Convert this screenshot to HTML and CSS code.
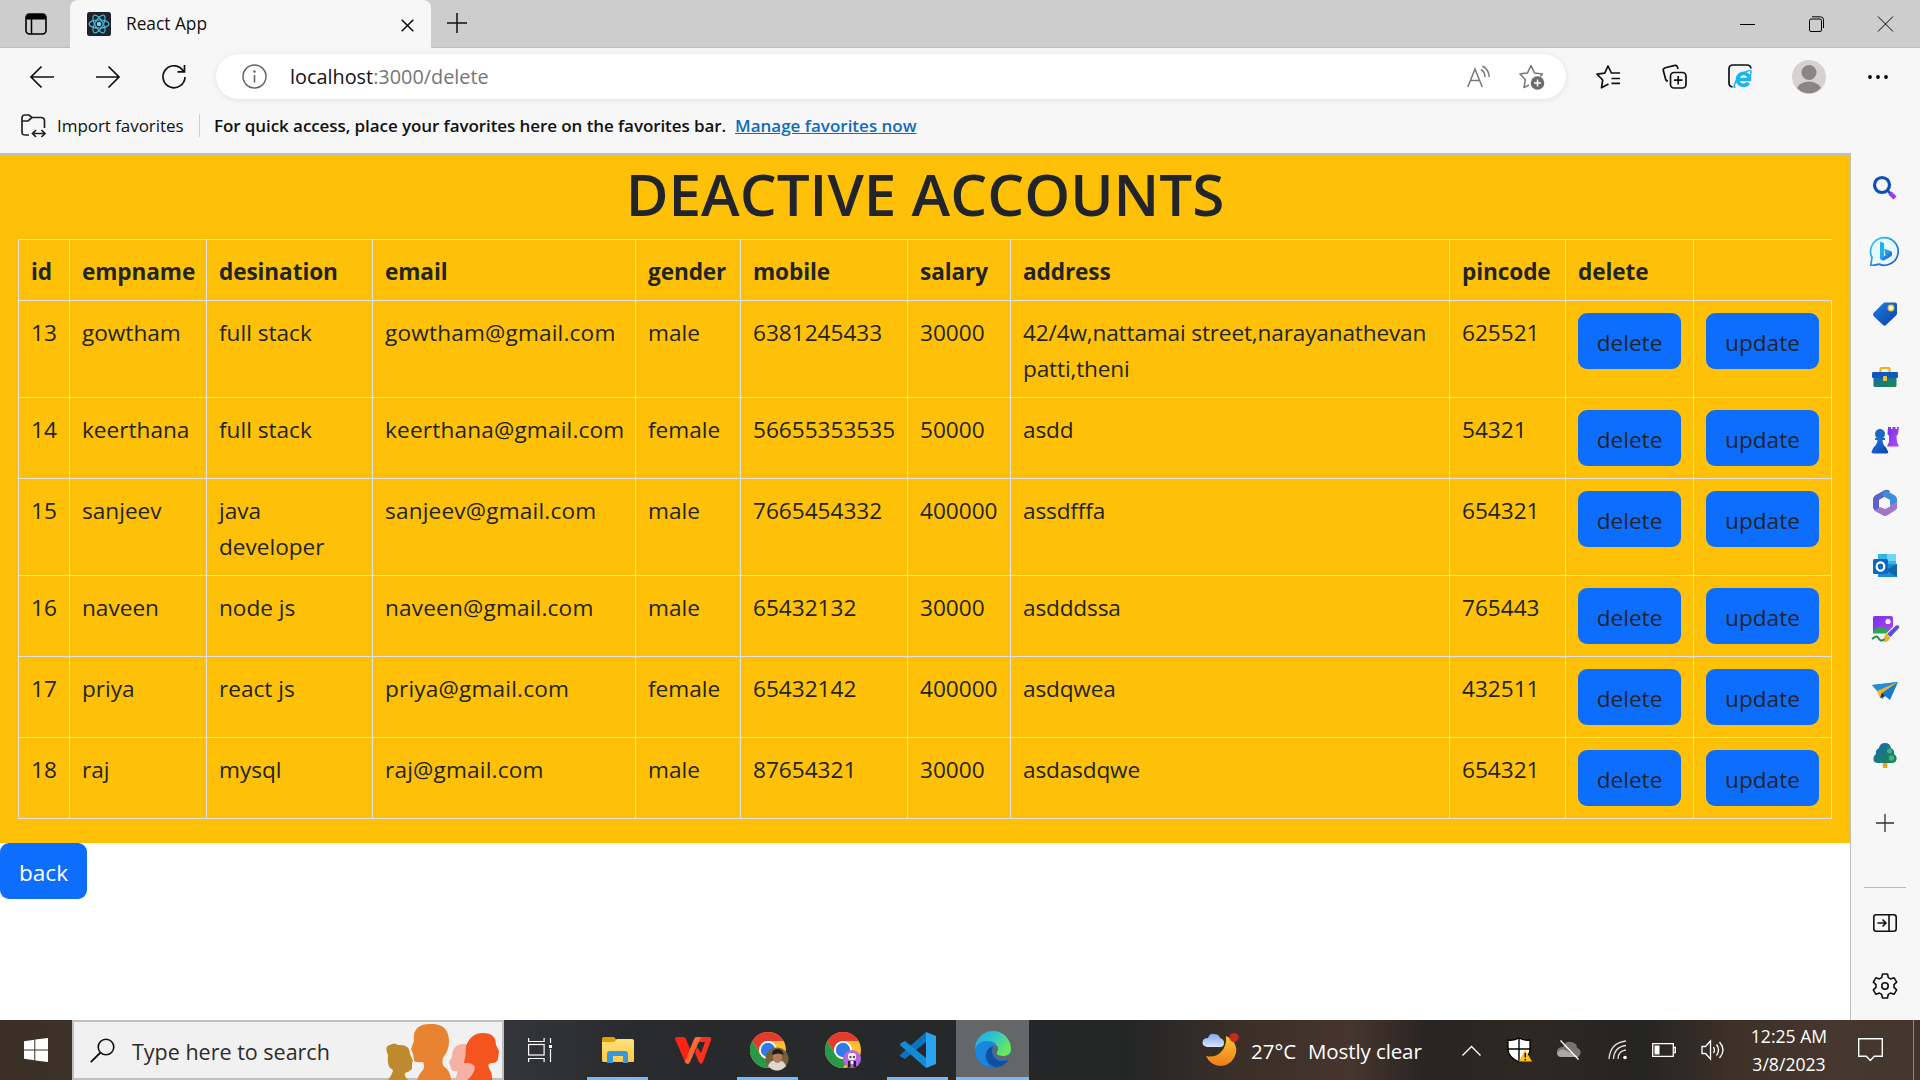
FILE: index.html
```html
<!DOCTYPE html>
<html lang="en">
<head>
<meta charset="utf-8">
<title>React App</title>
<link rel="stylesheet" href="styles.css">
</head>
<body>
<svg width="0" height="0" class="defs" aria-hidden="true">
  <defs>
    <linearGradient id="blue" x1="0" y1="0" x2="1" y2="1"><stop offset="0" stop-color="#1f7fe0"/><stop offset="1" stop-color="#0a3fae"/></linearGradient>
    <linearGradient id="cyan" x1="0" y1="0" x2="1" y2="1"><stop offset="0" stop-color="#35d0f5"/><stop offset="1" stop-color="#1a4fd0"/></linearGradient>
    <linearGradient id="teal" x1="0" y1="0" x2="1" y2="1"><stop offset="0" stop-color="#1668b8"/><stop offset="1" stop-color="#1a8a45"/></linearGradient>
    <linearGradient id="violet" x1="0" y1="0" x2="1" y2="1"><stop offset="0" stop-color="#7a2fe8"/><stop offset="1" stop-color="#b04af5"/></linearGradient>
    <linearGradient id="moon" x1="0" y1="0" x2="0" y2="1"><stop offset="0" stop-color="#f8c630"/><stop offset="1" stop-color="#f07c1a"/></linearGradient>
    <linearGradient id="cloud" x1="0" y1="0" x2="0" y2="1"><stop offset="0" stop-color="#7fa8ec"/><stop offset="1" stop-color="#d8e6fb"/></linearGradient>
    <linearGradient id="edgeTop" x1="0" y1="0" x2="1" y2=".5"><stop offset="0" stop-color="#25a4e8"/><stop offset=".5" stop-color="#2cc5d0"/><stop offset="1" stop-color="#6be85a"/></linearGradient>
    <linearGradient id="folder" x1="0" y1="0" x2="0" y2="1"><stop offset="0" stop-color="#ffe07a"/><stop offset="1" stop-color="#fccb45"/></linearGradient>
    <g id="chrome">
      <circle cx="18" cy="18" r="18" fill="#fbc031"/>
      <path d="M2.4 9A18 18 0 0 1 33.6 9H18A9 9 0 0 0 10.2 13.5L9 20Z" fill="#e33b2e"/>
      <path d="M2.4 9A18 18 0 0 0 18 36L25.8 22.5A9 9 0 0 1 10.2 22.5Z" fill="#279847"/>
      <circle cx="18" cy="18" r="9" fill="#fff"/>
      <circle cx="18" cy="18" r="7.2" fill="#2f7bea"/>
    </g>
  </defs>
</svg>

<header class="tabstrip">
  <svg class="tab-menu" width="22" height="22" viewBox="0 0 22 22"><rect x="1" y="1" width="20" height="20" rx="3.5" fill="none" stroke="#000" stroke-width="1.6"/><path d="M1 6.5V4a3 3 0 0 1 3-3h14a3 3 0 0 1 3 3v2.500z" fill="#000"/><path d="M6.500 6v15" stroke="#000" stroke-width="1.500"/></svg>
  <div class="tab">
    <svg width="24" height="24" viewBox="0 0 24 24"><rect width="24" height="24" rx="2.500" fill="#20232a"/><g fill="none" stroke="#4fb9d8" stroke-width="1.200"><ellipse cx="12" cy="12" rx="10" ry="4"/><ellipse cx="12" cy="12" rx="10" ry="4" transform="rotate(60 12 12)"/><ellipse cx="12" cy="12" rx="10" ry="4" transform="rotate(120 12 12)"/></g><circle cx="12" cy="12" r="2.200" fill="#61dafb"/></svg>
    <span class="tab-title">React App</span>
    <svg class="tab-close" width="13" height="13" viewBox="0 0 13 13"><path d="M.7.7l11.600 11.600M12.300.7L.7 12.300" stroke="#111" stroke-width="1.600"/></svg>
  </div>
  <svg class="tab-new" width="20" height="20" viewBox="0 0 20 20"><path d="M0 10h20M10 0v20" stroke="#111" stroke-width="1.500"/></svg>
  <div class="window-buttons">
    <svg width="15" height="16" viewBox="0 0 15 16"><path d="M0 8.500h15" stroke="#000"/></svg>
    <svg width="15" height="16" viewBox="0 0 15 16"><rect x=".5" y="3" width="12" height="12.500" rx="1.500" fill="none" stroke="#000"/><path d="M3 .8h8.500a3 3 0 0 1 3 3v8.200" fill="none" stroke="#000"/></svg>
    <svg width="15" height="16" viewBox="0 0 15 16"><path d="M0 .5l15 15M15 .5l-15 15" stroke="#000"/></svg>
  </div>
</header>

<div class="toolbar">
  <nav class="nav-buttons">
    <svg width="24" height="24" viewBox="0 0 24 24"><path d="M24 12H1M11.500 1.500L1 12l10.500 10.500" fill="none" stroke="#111" stroke-width="1.700"/></svg>
    <svg width="24" height="24" viewBox="0 0 24 24"><path d="M0 12h23M12.500 1.500L23 12 12.500 22.500" fill="none" stroke="#111" stroke-width="1.700"/></svg>
    <svg width="24" height="24" viewBox="0 0 24 24"><path d="M21.500 6.200A11 11 0 1 0 23 12M22.500 0v6.800h-7" fill="none" stroke="#111" stroke-width="1.700"/></svg>
  </nav>
  <div class="address">
    <svg width="25" height="25" viewBox="0 0 25 25"><circle cx="12.500" cy="12.500" r="11.500" fill="none" stroke="#666" stroke-width="1.500"/><path d="M12.500 11v7.500" stroke="#666" stroke-width="1.600"/><circle cx="12.500" cy="7.500" r="1.200" fill="#666"/></svg>
    <span class="url">localhost<span class="url-path">:3000/delete</span></span>
    <svg class="read" width="23" height="23" viewBox="0 0 23 23"><g fill="none" stroke="#777" stroke-width="1.500"><path d="M.8 22L8 4l7.200 18M3.500 15.500h9"/><path d="M14 4.500q4 2.500 4 7.500M15.500 1q6.500 3.500 6.700 11"/></g></svg>
    <svg class="fav-add" width="26" height="26" viewBox="0 0 26 26"><path d="M10 21L5 23.500 6.400 15.500.9 10l7.600-1.100L12 1.500l3.500 7.400 8 1.100-2.300 2.500" fill="none" stroke="#777" stroke-width="1.500" stroke-linejoin="round"/><circle cx="18.500" cy="19" r="6.800" fill="#6d6d6d"/><path d="M18.500 15.500v7M15 19h7" stroke="#fff" stroke-width="1.500"/></svg>
  </div>
  <div class="tools">
    <svg width="25" height="24" viewBox="0 0 25 24"><g fill="none" stroke="#111" stroke-width="1.700" stroke-linejoin="round"><path d="M12.500 19L5.500 22.800 6.700 15 1 9.200l7.700-1.100L12 1l3.400 7H24M15.500 13.500H24M15.500 18.300H24"/></g></svg>
    <svg width="25" height="25" viewBox="0 0 25 25"><g fill="none" stroke="#111" stroke-width="1.700"><rect x="8.500" y="8.500" width="15.500" height="15.500" rx="3.500"/><path d="M16.200 12v8.500M12 16.200h8.500M16 5l-.7-2.300Q14.800 1 13 1.400L3.200 3.700Q.8 4.500 1.300 6.500l2.300 8.500Q4 17 6 17"/></g></svg>
    <svg width="24" height="25" viewBox="0 0 24 25"><path d="M4.500 23Q1 22.500 1 19V5q0-4 4-4h14q3.500 0 4 3.500" fill="none" stroke="#111" stroke-width="1.700"/><g fill="none" stroke="#1db4ee"><path d="M9.500 15.500H21.500A6 6 0 1 0 20.500 18.700" stroke-width="3.600"/><path d="M7.500 22.500Q5 25 6.500 20.500 9.500 12 17.500 8q6-3 5.500 0 0 2-1 4" stroke-width="1.500"/></g></svg>
    <svg class="avatar" width="34" height="34" viewBox="0 0 34 34"><clipPath id="av"><circle cx="17" cy="17" r="16.200"/></clipPath><circle cx="17" cy="17" r="17" fill="#d5d3d0"/><circle cx="17" cy="12.500" r="7.500" fill="#8a8683"/><ellipse cx="17" cy="31" rx="12.500" ry="9.500" fill="#8a8683" clip-path="url(#av)"/></svg>
    <svg width="20" height="6" viewBox="0 0 20 6"><circle cx="2" cy="3" r="1.900"/><circle cx="10" cy="3" r="1.900"/><circle cx="18" cy="3" r="1.900"/></svg>
  </div>
</div>

<div class="favbar">
  <svg width="25" height="24" viewBox="0 0 25 24"><g fill="none" stroke="#222" stroke-width="1.700"><path d="M8 21H4q-3 0-3-3V4q0-3 3-3h4l3 2.500h9q3.500 0 3.500 3.500v7M1 7h6l4-3.500"/><path d="M12 19.500h12M15 16l-3.500 3.500L15 23M20.500 16l3.500 3.500-3.500 3.500"/></g></svg>
  <span class="import">Import favorites</span>
  <span class="hint">For quick access, place your favorites here on the favorites bar.</span>
  <a class="manage">Manage favorites now</a>
</div>

<div class="workspace">
  <main class="page">
    <section class="panel">
      <h1>DEACTIVE ACCOUNTS</h1>
      <table>
        <colgroup><col class="c-id"><col class="c-name"><col class="c-desig"><col class="c-email"><col class="c-gender"><col class="c-mobile"><col class="c-salary"><col class="c-address"><col class="c-pin"><col class="c-delete"><col class="c-update"></colgroup>
        <thead><tr><th>id</th><th>empname</th><th>desination</th><th>email</th><th>gender</th><th>mobile</th><th>salary</th><th>address</th><th>pincode</th><th>delete</th></tr></thead>
        <tbody>
          <tr class="tall"><td>13</td><td>gowtham</td><td>full stack</td><td class="mail">gowtham@gmail.com</td><td>male</td><td>6381245433</td><td>30000</td><td class="addr">42/4w,nattamai street,narayanathevan<br>patti,theni</td><td>625521</td><td class="act"><button class="btn">delete</button></td><td class="act"><button class="btn">update</button></td></tr>
          <tr><td>14</td><td>keerthana</td><td>full stack</td><td class="mail">keerthana@gmail.com</td><td>female</td><td>56655353535</td><td>50000</td><td class="addr">asdd</td><td>54321</td><td class="act"><button class="btn">delete</button></td><td class="act"><button class="btn">update</button></td></tr>
          <tr class="tall"><td>15</td><td>sanjeev</td><td>java<br>developer</td><td class="mail">sanjeev@gmail.com</td><td>male</td><td>7665454332</td><td>400000</td><td class="addr">assdfffa</td><td>654321</td><td class="act"><button class="btn">delete</button></td><td class="act"><button class="btn">update</button></td></tr>
          <tr><td>16</td><td>naveen</td><td>node js</td><td class="mail">naveen@gmail.com</td><td>male</td><td>65432132</td><td>30000</td><td class="addr">asdddssa</td><td>765443</td><td class="act"><button class="btn">delete</button></td><td class="act"><button class="btn">update</button></td></tr>
          <tr><td>17</td><td>priya</td><td>react js</td><td class="mail">priya@gmail.com</td><td>female</td><td>65432142</td><td>400000</td><td class="addr">asdqwea</td><td>432511</td><td class="act"><button class="btn">delete</button></td><td class="act"><button class="btn">update</button></td></tr>
          <tr><td>18</td><td>raj</td><td>mysql</td><td class="mail">raj@gmail.com</td><td>male</td><td>87654321</td><td>30000</td><td class="addr">asdasdqwe</td><td>654321</td><td class="act"><button class="btn">delete</button></td><td class="act"><button class="btn">update</button></td></tr>
        </tbody>
      </table>
    </section>
    <button class="btn back">back</button>
  </main>

  <aside class="sidebar">
    <div class="apps">
      <svg width="32" height="32" viewBox="0 0 32 32"><circle cx="13" cy="13" r="7.500" fill="none" stroke="#0f4fb8" stroke-width="3.200"/><path d="M18.500 18.500l3 3" stroke="#0f4fb8" stroke-width="2.500"/><path d="M21 21l5 5" stroke="#9a3df0" stroke-width="4.500"/></svg>
      <svg width="32" height="32" viewBox="0 0 32 32"><path d="M1.800 30.200L3 22.500A13.800 13.800 0 1 1 10 29.100Q6 30.500 1.800 30.200z" fill="#e8f9ff" stroke="url(#cyan)" stroke-width="1.700"/><path d="M11 6.500l4 1.600v13.400l-4 2.500z" fill="#22aeef"/><path d="M11 23.500l5.500-3-1.500-7 7.500 3q2 4-2 5.800l-5.500 3.200q-3 .5-4-2z" fill="url(#cyan)"/></svg>
      <svg width="32" height="32" viewBox="0 0 32 32"><path d="M16 4.500h10q2 0 2 2v9q0 1-1 2L17 27q-1.500 1.500-3 0L4.500 18q-1-1.500 0-3L14 5.500q1-1 2-1z" fill="url(#blue)"/><circle cx="22" cy="10" r="2.700" fill="#fff" stroke="#f5c42c" stroke-width="1.500"/></svg>
      <svg width="32" height="32" viewBox="0 0 32 32"><path d="M11.500 11V8q0-1 1-1h7q1 0 1 1v3" fill="none" stroke="#f0ac25" stroke-width="2.200"/><rect x="4.500" y="15" width="23" height="11" rx="1.500" fill="url(#teal)"/><rect x="3" y="11" width="26" height="6" rx="1.200" fill="#1157c2"/><rect x="14" y="15" width="4" height="5" rx="1" fill="#f5c42c"/></svg>
      <svg width="32" height="32" viewBox="0 0 32 32"><path d="M19 3h3v2h1.500V3h3v2H28V3h2l-1 7-1.500 2 .5 6 2 4.500H18l2-4.500v-6l-1.500-2z" fill="url(#violet)"/><circle cx="11" cy="10" r="5" fill="#1b68c4"/><path d="M6 14h10v2h-2.500q0 5 3.500 7.500l1.500 3q2 3-1.500 3H5q-3.500 0-2-3l1.500-3Q8 21 8.500 16H6z" fill="url(#blue)"/></svg>
      <svg width="32" height="32" viewBox="0 0 32 32"><path d="M16 3L6 8.500Q4 10 4 12v8q0 2 2 3.500l4 2V13l9-5.500L21 4q-3-2-5-1z" fill="#5c62c8"/><path d="M16 3l10 5.500Q28 10 28 12v10l-7-4v-5l-8-4.500z" fill="#3b8fda"/><path d="M28 20q0 2-2 3.500l-8 5q-2 1-4 0l-9-5 6-3.500 5 2 6-4 6-3z" fill="#a176c8"/><path d="M16 10.500l5 3v6L16 22l-5-3v-5.500z" fill="#f7f7f7"/></svg>
      <svg width="32" height="32" viewBox="0 0 32 32"><path d="M9 4h18v12H9z" fill="#35b4ec"/><path d="M18 4h9v7h-9z" fill="#70d3f8"/><path d="M9 14h19v13H9z" fill="#1b8bd8"/><path d="M17 20l11-6v13z" fill="#1262ac"/><rect x="4" y="9" width="15" height="15" rx="1.500" fill="#0b68bd"/><ellipse cx="11.500" cy="16.500" rx="3.800" ry="4.200" fill="none" stroke="#fff" stroke-width="2.200"/></svg>
      <svg width="32" height="32" viewBox="0 0 32 32"><rect x="4" y="3" width="20" height="20" rx="2" fill="url(#violet)"/><circle cx="19" cy="8.500" r="2.600" fill="#fff"/><path d="M4 18q8-8 16 0l-4 4H4z" fill="#2aa655"/><path d="M4 20.500h13l7-7h2v10H4z" fill="#f7f7f7"/><path d="M3 26q5-4 6-1.500t3 3 5-2.500" fill="none" stroke="#1c8a4a" stroke-width="2"/><path d="M18 21l9-8.500q4-1 3 2.500L21.500 24z" fill="#5550e0"/><path d="M17.500 20.500l4 4q-2 5-7 4.500 2-2 .5-5z" fill="#f2b128"/></svg>
      <svg width="32" height="32" viewBox="0 0 32 32"><path d="M3 9l26-3-8 18-5-4-3 3-3-6z" fill="#147bd1"/><path d="M3 9l26-3L10 17z" fill="#1e90e0"/><path d="M29 6L8 15l3 7 2-5z" fill="#f5b324"/><path d="M11 22l2-5 3 3z" fill="#333"/></svg>
      <svg width="32" height="32" viewBox="0 0 32 32"><rect x="13.800" y="22" width="4.600" height="7" rx="1" fill="#f0a020"/><path d="M16 4q5 0 6 5 4 2 3 6 4 3 2 7-1 2-4 2H9q-4 0-4.500-3Q4 17 7 15q-1-4 3-6 1-5 6-5z" fill="url(#teal)"/><circle cx="20.500" cy="12" r="2.500" fill="#4cab82"/><circle cx="22.500" cy="19" r="2.700" fill="#49ad7d"/></svg>
    </div>
    <svg class="add-app" width="18" height="18" viewBox="0 0 18 18"><path d="M0 9h18M9 0v18" stroke="#333" stroke-width="1.300"/></svg>
    <div class="rule"></div>
    <svg class="hide-bar" width="24" height="18" viewBox="0 0 24 18"><g fill="none" stroke="#111" stroke-width="1.600"><rect x=".8" y=".8" width="22.400" height="16.400" rx="2.500"/><path d="M16 1v16M4.500 9h8M9.500 5.500L13 9l-3.500 3.500"/></g></svg>
    <svg class="settings" width="26" height="26" viewBox="0 0 26 26"><g fill="none" stroke="#111" stroke-width="1.600" stroke-linejoin="round"><path d="M10.500 1h5l.8 3.600 2.300 1.300L22 4.700l2.700 4.400L22 11.600v2.800l2.700 2.500L22 21.300l-3.400-1.200-2.300 1.300-.8 3.600h-5l-.8-3.600-2.300-1.300L4 21.300l-2.700-4.400L4 14.400v-2.800L1.300 9.100 4 4.700l3.400 1.200 2.300-1.300z"/><circle cx="13" cy="13" r="3.200"/></g></svg>
  </aside>
</div>

<footer class="taskbar">
  <div class="start"><svg width="24" height="24" viewBox="0 0 24 24"><path d="M0 3.200l10.300-1.400v9.700H0zM11.300 1.600L24 0v11.500H11.300zM0 12.500h10.300v9.700L0 20.800zM11.300 12.500H24V24l-12.700-1.600z" fill="#fff"/></svg></div>
  <div class="search">
    <svg class="glass" width="25" height="25" viewBox="0 0 25 25"><circle cx="16" cy="9" r="7.800" fill="none" stroke="#111" stroke-width="1.600"/><path d="M10.500 14.500L.8 24.200" stroke="#111" stroke-width="1.800"/></svg>
    <span>Type here to search</span>
    <svg class="people" width="116" height="58" viewBox="0 0 116 58">
      <path d="M2 58q4-4 6-10 0-2-3-3-3-4-2-13-4-9 2-10 4-3 8 0 12-1 12 9l3 7-1 2 0 6-4 3q-4 0-3 4 2 4 5 5z" fill="#bf8a2d"/>
      <path d="M68 58q5-6 4-10-5 1-6-3l-2-6 3-5q0-13 12-13 14 0 14 12v25z" fill="#f5b2a3"/>
      <path d="M32 58q1-6 6-11 2-4 0-8-9 1-9-2l-1-6-2-5 3-8Q27 0 47 1q17 0 17 18 0 8-6 16-2 7 3 10 5 5 5 13z" fill="#e88331"/>
      <path d="M81 58q8-6 9-14-3-4-7-4h-4q2-8 2-17Q86 10 98 10q13 0 13 12l3 6-1 7q0 5-6 5-5 0-3 5 4 6 3 13z" fill="#f4541e"/>
    </svg>
  </div>
  <svg class="task-view" width="25" height="24" viewBox="0 0 25 24"><g fill="none" stroke="#fff" stroke-width="1.200"><path d="M.6 0v3.500h15.500V0M.6 24v-3.500h15.500V24M22.500 0v5M22.500 11v13"/><rect x=".6" y="6.500" width="15.500" height="10.500"/></g><rect x="21" y="7" width="3" height="3" fill="#fff"/></svg>
  <div class="pinned">
    <div class="app open"><svg width="36" height="36" viewBox="0 0 36 36"><path d="M2 7q0-2 2-2h10l3 3h15q2 0 2 2v20H4q-2 0-2-2z" fill="#e0a100"/><path d="M2 10h12l3-3h15q2 0 2 2v19q0 2-2 2H4q-2 0-2-2z" fill="url(#folder)"/><path d="M7 31V22q0-3 3-3h15q3 0 3 3v9h-5v-7H13v7z" fill="#3b96dc"/></svg></div>
    <div class="app"><svg width="36" height="36" viewBox="0 0 36 36"><path d="M0 7q0-2 2-2h6q2 0 3 2l6 15-3 8q-2 3-4 0z" fill="#fb2218"/><path d="M20 5h14q3 0 2 3l-8 22q-2 4-4 0l-4-9 2-6 4 6 4-11h-7z" fill="#f9301e"/><path d="M10 30L19 7q1-2 3-2h4L15 30q-2 4-5 0z" fill="#ff6a32"/></svg></div>
    <div class="app open"><svg width="36" height="36" viewBox="0 0 36 36"><use href="#chrome"/><circle cx="27" cy="27" r="11.500" fill="#75603a"/><path d="M18 34q2-6 9-6t9 6q-9 9-18 0z" fill="#ddd8d2"/><ellipse cx="27.500" cy="25" rx="4.600" ry="6" fill="#b47c5c"/><path d="M22 23q0-6 5.500-6t6 6q-5-3-11.500 0z" fill="#241c18"/></svg></div>
    <div class="app"><svg width="36" height="36" viewBox="0 0 36 36"><use href="#chrome"/><circle cx="27" cy="27" r="9" fill="#b568e0"/><rect x="23" y="21" width="8" height="7" rx="2.500" fill="#eee"/><path d="M24.500 25h2M28 25h2" stroke="#222" stroke-width="1.500"/><path d="M23 35v-6h8v6h-2.500v-3h-3v3z" fill="#222"/><path d="M25.500 29h3v3h-3z" fill="#eee"/></svg></div>
    <div class="app open"><svg width="36" height="36" viewBox="0 0 36 36"><path d="M26 0v10L5 27l-4-2q-2-1.500 0-3z" fill="#0c74bd"/><path d="M26 36V26L5 9 1 11q-2 1.500 0 3z" fill="#1489d4"/><path d="M26 0l10 4v28l-10 4z" fill="#2ba3f0"/></svg></div>
    <div class="app open active"><svg width="36" height="36" viewBox="0 0 36 36"><circle cx="18" cy="18" r="18" fill="#1277cf"/><path d="M0 17A18 18 0 0 1 36 17q0 7-7 7-9 0-7-4 2-5-3-8T0 17z" fill="url(#edgeTop)"/><path d="M0 18Q2 9 12 9q10 0 11 8-9-4-12 4-3 8 5 14Q1 33 0 18z" fill="#1b86dc"/><path d="M18 14q-8 3-7 11 2 8 10 10.500 9-1.500 13-8-8 4-14-1-5-5-2-12z" fill="#124fa0"/><path d="M18 14q4-1 5 2 0 2-1.500 4-1 3 3 4 5 1 9-1 3-2 4-4l1 6-4.500 2.500Q27 29 21 26q-5-5-3-12z" fill="#656667"/></svg></div>
  </div>
  <div class="weather">
    <svg width="38" height="36" viewBox="0 0 38 36"><path d="M24 4q12 6 10 17-3 12-15 13-11-.5-15-10 9 2 15-4 6-6 5-16z" fill="url(#moon)"/><path d="M5 15q-5-1-4.500-5T6 6q2-5 6-4 5 0 6 4 4 1 4 5t-4 4z" fill="url(#cloud)"/><circle cx="32" cy="5.500" r="4.600" fill="#c62a1c"/></svg>
    <span class="temp">27°C</span><span class="sky">Mostly clear</span>
  </div>
  <div class="tray">
    <svg width="19" height="11" viewBox="0 0 19 11"><path d="M.5 10.500l9-9 9 9" fill="none" stroke="#fff" stroke-width="1.400"/></svg>
    <svg width="26" height="26" viewBox="0 0 26 26"><path d="M12 1q5 3 11 2v9q0 8-11 13Q1 20 1 12V3q6 1 11-2z" fill="#fff" stroke="#000" stroke-width="1.300"/><path d="M12 1v23M1 12h22" stroke="#000" stroke-width="1.400"/><path d="M18 12.500l7 12H12z" fill="#fcc01e"/><path d="M18.300 16v4.500M18.300 22v1.500" stroke="#000" stroke-width="1.300"/></svg>
    <svg width="25" height="20" viewBox="0 0 25 20"><path d="M7 17q-6 0-6-5t6-5q2-6 8-5 6 1 6 6 4 1 3.500 5-.5 4-5 4z" fill="#777572"/><path d="M1 13q4-6 10-2l12 6H6q-5 0-5-4z" fill="#aaa8a6"/><path d="M4.500.5l18 19" stroke="#fff" stroke-width="1.300"/></svg>
    <svg width="20" height="20" viewBox="0 0 20 20"><g fill="none" stroke="#ddd" stroke-width="1.300"><path d="M1 19Q2 3 18 1M5.500 19Q6 7 18 5.500M10 19q0-8 8-9"/></g><circle cx="17" cy="17.500" r="1.800" fill="#fff"/></svg>
    <svg width="24" height="14" viewBox="0 0 24 14"><path d="M.7.7h20.600v12.600H.7zM21.300 4.500h2v5h-2" fill="none" stroke="#fff" stroke-width="1.300"/><path d="M2.500 2.500h5v9h-5z" fill="#fff"/></svg>
    <svg width="24" height="20" viewBox="0 0 24 20"><g fill="none" stroke="#fff" stroke-width="1.300"><path d="M1 6.500h3.500L9.500 1v18l-5-5.500H1zM12.500 7q2 3 0 6M15.500 4.500q4 5.500 0 11M18.500 2q7 8 0 16"/></g></svg>
  </div>
  <div class="clock"><span class="time">12:25 AM</span><span class="date">3/8/2023</span></div>
  <svg class="notices" width="25" height="24" viewBox="0 0 25 24"><path d="M.7.7h23.600v17.600h-8l-4 4.200-4-4.200H.7z" fill="none" stroke="#fff" stroke-width="1.400"/></svg>
  <div class="peek"></div>
</footer>
</body>
</html>
```
FILE: styles.css
```css
* { box-sizing: border-box; }

body {
  margin: 0;
  width: 1920px;
  height: 1080px;
  overflow: hidden;
  display: flex;
  flex-direction: column;
  font-family: "Open Sans", "Noto Sans", sans-serif;
  color: #111;
  background: #f7f7f7;
  white-space: nowrap;
}

svg { display: block; flex: none; overflow: visible; }
.defs { position: absolute; }

/* Tab strip */
.tabstrip {
  flex: none;
  height: 48px;
  display: flex;
  align-items: center;
  background: #cdcdcd;
  box-shadow: inset 0 -1px #bdbdbd;
}
.tab-menu { margin-left: 25px; }
.tab {
  display: flex;
  align-items: center;
  width: 361px;
  height: 48px;
  margin-left: 23px;
  padding: 0 17px;
  background: #f7f7f7;
  border-radius: 8px 8px 0 0;
}
.tab-title { margin-left: 15px; padding-bottom: 2px; font-size: 17.300px; }
.tab-close { margin-left: auto; margin-top: 2px; }
.tab-new { margin-left: 16px; margin-top: -2px; }
.window-buttons { display: flex; gap: 54px; margin: 0 27px 0 auto; }

/* Toolbar */
.toolbar { flex: none; display: flex; align-items: center; height: 57px; }
.nav-buttons { display: flex; gap: 42px; margin-left: 30px; }
.address {
  display: flex;
  align-items: center;
  width: 1350px;
  height: 45px;
  margin-left: 30px;
  padding: 0 21px 0 26px;
  background: #fff;
  border-radius: 23px;
  box-shadow: 0 1px 6px rgba(0, 0, 0, .09);
}
.url { margin-left: 23px; font-size: 19.850px; }
.url-path { color: #767676; }
.read { margin-left: auto; }
.fav-add { margin-left: 29px; }
.tools { display: flex; align-items: center; flex: 1; padding-left: 30px; }
.tools svg + svg { margin-left: 41px; }
.tools svg.avatar { margin-left: 40px; }
.tools svg.avatar + svg { margin-left: 42px; }

/* Favorites bar */
.favbar {
  flex: none;
  display: flex;
  align-items: center;
  height: 48px;
  padding: 0 0 7px 21px;
  font-size: 17px;
}
.import { width: 131px; margin-left: 11px; letter-spacing: -.05px; }
.hint {
  margin-left: 11px;
  padding-left: 14px;
  width: 527px;
  border-left: 1px solid #cfcfcf;
  font-weight: 600;
  letter-spacing: -.08px;
}
.manage { margin-left: 9px; font-weight: 600; color: #0f6cbd; text-decoration: underline; }

/* Web page */
.workspace { display: flex; flex: 1; min-height: 0; }
.page {
  width: 1851px;
  background: #fff;
  border-top: 2px solid #c0c0c0;
  border-right: 1px solid #c0c0c0;
  color: #212529;
  font-size: 22.600px;
  line-height: 36px;
}
.panel { height: 688px; padding: 0 18px; background: #ffc107; }
h1 {
  margin: 0;
  height: 84px;
  padding-top: 3px;
  font-size: 58.400px;
  line-height: 72px;
  font-weight: 600;
  text-align: center;
}
table { width: 1814px; table-layout: fixed; border-collapse: collapse; }
.c-id { width: 51px; }
.c-name { width: 137px; }
.c-desig { width: 166px; }
.c-email { width: 263px; }
.c-gender { width: 105px; }
.c-mobile { width: 167px; }
.c-salary { width: 103px; }
.c-address { width: 439px; }
.c-pin { width: 116px; }
.c-delete { width: 128px; }
.c-update { width: 138px; }
thead tr { height: 61px; border-top: 1px solid #dee2e6; }
tbody tr { height: 81px; }
tbody tr.tall { height: 97px; }
th, td {
  padding: 14px 0 9px 12px;
  border: 1px solid #dee2e6;
  vertical-align: top;
  text-align: left;
}
th { letter-spacing: -.1px; }
td.mail { letter-spacing: .18px; }
td.addr { letter-spacing: -.15px; }
td.act { padding: 12px 12px 0; }
.btn {
  display: block;
  width: 100%;
  height: 56px;
  padding: 3px 0 0;
  border: 0;
  border-radius: 9px;
  background: #0d6efd;
  color: #212529;
  font: inherit;
}
.btn.back { width: 87px; color: #fff; }

/* Edge sidebar */
.sidebar { display: flex; flex-direction: column; align-items: center; width: 69px; padding: 19px 1px 0 0; }
.apps { display: flex; flex-direction: column; gap: 31px; }
.add-app { margin-top: 43px; }
.rule { flex: none; width: 42px; height: 1px; margin-top: 55px; background: #bbb; }
.hide-bar { margin-top: 26px; }
.settings { margin-top: 41px; }

/* Taskbar */
.taskbar {
  flex: none;
  display: flex;
  align-items: center;
  height: 60px;
  color: #fff;
  background: linear-gradient(90deg, #3a3026 0, #3a3128 72px, #33353a 510px, #282a2d 640px, #242626 1130px, #3b2f28 1240px, #46352e 1350px, #282421 1430px, #2f2822 1530px, #242423 1640px, #3c3027 1730px, #46372f 1830px, #44352d 1920px);
}
.start { width: 72px; padding-left: 24px; }
.search {
  display: flex;
  align-items: center;
  width: 432px;
  height: 60px;
  padding-left: 16px;
  border: 2px solid #c0c0c0;
  background: #f1f1f1;
  color: #2b2b2b;
  font-size: 21.500px;
}
.search span { width: 200px; margin-left: 17px; padding-top: 2px; }
.people { align-self: flex-start; margin: 1px 0 0 53px; }
.task-view { margin-left: 24px; }
.pinned { display: flex; margin-left: 28px; height: 60px; }
.app {
  display: flex;
  align-items: center;
  justify-content: center;
  width: 73px;
  margin-right: 2px;
  background: linear-gradient(#76b9f5, #76b9f5) center bottom / 0 3px no-repeat;
}
.app.open { background-size: 61px 3px; }
.app.active { background-color: #656667; background-size: 100% 3px; }
.weather { display: flex; align-items: center; margin-left: 171px; font-size: 20.500px; }
.temp { width: 43px; margin-left: 11px; padding-top: 2px; }
.sky { width: 111px; margin-left: 14px; padding-top: 2px; letter-spacing: -.1px; }
.tray { display: flex; align-items: center; margin-left: 43px; }
.tray svg + svg { margin-left: 25px; }
.tray svg:nth-child(2) { margin-left: 26px; }
.tray svg:nth-child(3) { margin-left: 23px; }
.tray svg:nth-child(4) { margin-left: 27px; }
.tray svg:nth-child(5) { margin-left: 24px; }
.clock {
  display: flex;
  flex-direction: column;
  align-items: center;
  width: 78px;
  margin-left: 25px;
  font-size: 17.600px;
  line-height: 28px;
}
.notices { margin-left: 30px; }
.peek { width: 1px; height: 60px; margin-left: 30px; background: #8f8680; }
```
